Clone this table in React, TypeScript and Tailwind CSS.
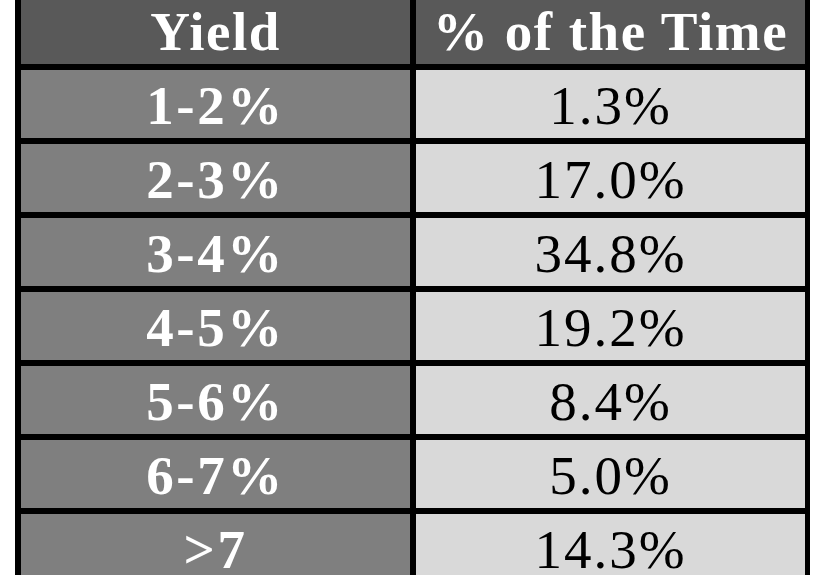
import React from 'react';

const rows: [string, string][] = [
  ['1-2%', '1.3%'],
  ['2-3%', '17.0%'],
  ['3-4%', '34.8%'],
  ['4-5%', '19.2%'],
  ['5-6%', '8.4%'],
  ['6-7%', '5.0%'],
  ['>7', '14.3%'],
];

const App: React.FC = () => {
  return (
    <div className="w-[825px] h-[575px] overflow-hidden bg-white pl-[15px]">
      {/* Table: black background shows through the gaps as cell borders */}
      <div
        className="w-[795px] bg-black pl-[6px] pr-[5px] pb-[6px] grid grid-cols-[389px_389px] gap-[6px] text-[55px] leading-normal"
        style={{ fontFamily: '"Liberation Serif", "Times New Roman", serif' }}
      >
        <div className="h-[64px] bg-[#595959] flex items-center justify-center text-white font-bold tracking-[1.5px]">
          Yield
        </div>
        <div className="h-[64px] bg-[#595959] flex items-center justify-center text-white font-bold tracking-[1.5px]">
          % of the Time
        </div>

        {rows.map(([yieldRange, pct]) => (
          <React.Fragment key={yieldRange}>
            <div className="h-[68px] bg-[#7f7f7f] flex items-center justify-center pt-[4px] text-white font-bold tracking-[2.5px]">
              {yieldRange}
            </div>
            <div className="h-[68px] bg-[#d9d9d9] flex items-center justify-center pt-[4px] text-black tracking-[2px]">
              {pct}
            </div>
          </React.Fragment>
        ))}
      </div>
    </div>
  );
};

export default App;
